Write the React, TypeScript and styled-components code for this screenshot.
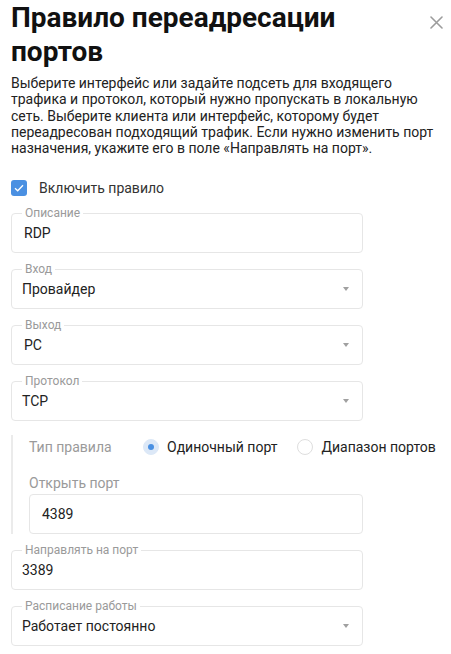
import React from "react";
import styled, { createGlobalStyle } from "styled-components";

const Global = createGlobalStyle`
  html, body { margin: 0; padding: 0; background: #fff; }
  body { font-family: Roboto, "Noto Sans", Arial, sans-serif; -webkit-font-smoothing: antialiased; }
  * { box-sizing: border-box; }
`;

const Page = styled.div`
  width: 451px;
  padding: 1px 11px 0 11px;
  display: flex;
  flex-direction: column;
`;

const Header = styled.div`
  display: flex;
  align-items: flex-start;
  justify-content: space-between;
`;

const Title = styled.h1`
  margin: 0;
  font-size: 28px;
  line-height: 34px;
  font-weight: 700;
  color: #111;
  flex: 1;
  padding-right: 30px;
`;

const CloseButton = styled.button`
  border: 0;
  background: none;
  padding: 0;
  width: 14px;
  height: 14px;
  margin-top: 14px;
  margin-right: -3px;
  display: flex;
  align-items: center;
  justify-content: center;
  cursor: pointer;
`;

const Description = styled.p`
  margin: 6px 0 0 0;
  font-size: 14px;
  line-height: 16.3px;
  color: #222;
`;

const CheckRow = styled.label`
  display: flex;
  align-items: center;
  gap: 12px;
  margin-top: 24px;
  height: 16px;
  font-size: 14px;
  color: #333;
`;

const CheckBox = styled.span`
  width: 16px;
  height: 16px;
  border-radius: 3px;
  background: #4a90e2;
  display: flex;
  align-items: center;
  justify-content: center;
`;

const Fields = styled.div`
  display: flex;
  flex-direction: column;
  gap: 16px;
  margin-top: 17px;
`;

const Field = styled.div<{ $inset?: boolean; $width?: number }>`
  position: relative;
  width: ${(p) => p.$width ?? 352}px;
  height: 40px;
  border: 1px solid #e6e6e6;
  border-radius: 4px;
  display: flex;
  align-items: center;
  justify-content: space-between;
  padding: 0 10px 0 ${(p) => (p.$inset ? 12 : 10)}px;
  font-size: 14px;
  color: #222;
`;

const Legend = styled.span`
  position: absolute;
  left: 10px;
  top: -8px;
  padding: 0 3px;
  background: #fff;
  font-size: 12px;
  line-height: 14px;
  color: #9a9a9a;
`;

const Arrow = styled.span`
  width: 0;
  height: 0;
  border-left: 3.5px solid transparent;
  border-right: 3.5px solid transparent;
  border-top: 4px solid #a0a0a0;
  margin-right: 3px;
`;

const Section = styled.div`
  margin: -2px 0 0 0;
  border-left: 2px solid #ebebeb;
  padding-left: 16px;
  display: flex;
  flex-direction: column;
`;

const RadioRow = styled.div`
  display: flex;
  align-items: center;
  height: 24px;
  font-size: 14px;
  color: #222;
  white-space: nowrap;
`;

const RowLabel = styled.span`
  width: 114px;
  flex-shrink: 0;
  color: #9a9a9a;
`;

const RadioOption = styled.label`
  display: flex;
  align-items: center;
  gap: 8px;
  margin-right: 20px;
  flex-shrink: 0;
`;

const RadioCircle = styled.span<{ $checked?: boolean }>`
  width: 16px;
  height: 16px;
  border-radius: 50%;
  border: 1px solid ${(p) => (p.$checked ? "#dce8f7" : "#dedede")};
  background: ${(p) => (p.$checked ? "#dce8f7" : "#fff")};
  display: flex;
  align-items: center;
  justify-content: center;
  &::after {
    content: "";
    width: 6px;
    height: 6px;
    border-radius: 50%;
    background: ${(p) => (p.$checked ? "#4a90e2" : "transparent")};
  }
`;

const SubLabel = styled.div`
  margin-top: 14px;
  height: 20px;
  line-height: 20px;
  font-size: 14px;
  color: #9a9a9a;
  margin-bottom: 1px;
`;

const Close = () => (
  <svg width="13" height="13" viewBox="0 0 13 13">
    <path d="M1 1L12 12M12 1L1 12" stroke="#9c9c9c" strokeWidth="1.6" strokeLinecap="round" />
  </svg>
);

const Check = () => (
  <svg width="10" height="8" viewBox="0 0 10 8">
    <path d="M1 4.2L3.7 6.8L9 1.2" stroke="#fff" strokeWidth="1.3" fill="none" />
  </svg>
);

export default function App() {
  return (
    <>
      <Global />
      <Page>
        <Header>
          <Title>Правило переадресации портов</Title>
          <CloseButton aria-label="Закрыть">
            <Close />
          </CloseButton>
        </Header>
        <Description>
          Выберите интерфейс или задайте подсеть для входящего трафика и протокол, который нужно
          пропускать в локальную сеть. Выберите клиента или интерфейс, которому будет переадресован
          подходящий трафик. Если нужно изменить порт назначения, укажите его в поле «Направлять на
          порт».
        </Description>
        <CheckRow>
          <CheckBox>
            <Check />
          </CheckBox>
          Включить правило
        </CheckRow>
        <Fields>
          <Field $inset>
            <Legend>Описание</Legend>
            RDP
          </Field>
          <Field>
            <Legend>Вход</Legend>
            Провайдер
            <Arrow />
          </Field>
          <Field $inset>
            <Legend>Выход</Legend>
            PC
            <Arrow />
          </Field>
          <Field>
            <Legend>Протокол</Legend>
            TCP
            <Arrow />
          </Field>
          <Section>
            <RadioRow>
              <RowLabel>Тип правила</RowLabel>
              <RadioOption>
                <RadioCircle $checked />
                Одиночный порт
              </RadioOption>
              <RadioOption>
                <RadioCircle />
                Диапазон портов
              </RadioOption>
            </RadioRow>
            <SubLabel>Открыть порт</SubLabel>
            <Field $inset $width={334}>4389</Field>
          </Section>
          <Field>
            <Legend>Направлять на порт</Legend>
            3389
          </Field>
          <Field>
            <Legend>Расписание работы</Legend>
            Работает постоянно
            <Arrow />
          </Field>
        </Fields>
      </Page>
    </>
  );
}
